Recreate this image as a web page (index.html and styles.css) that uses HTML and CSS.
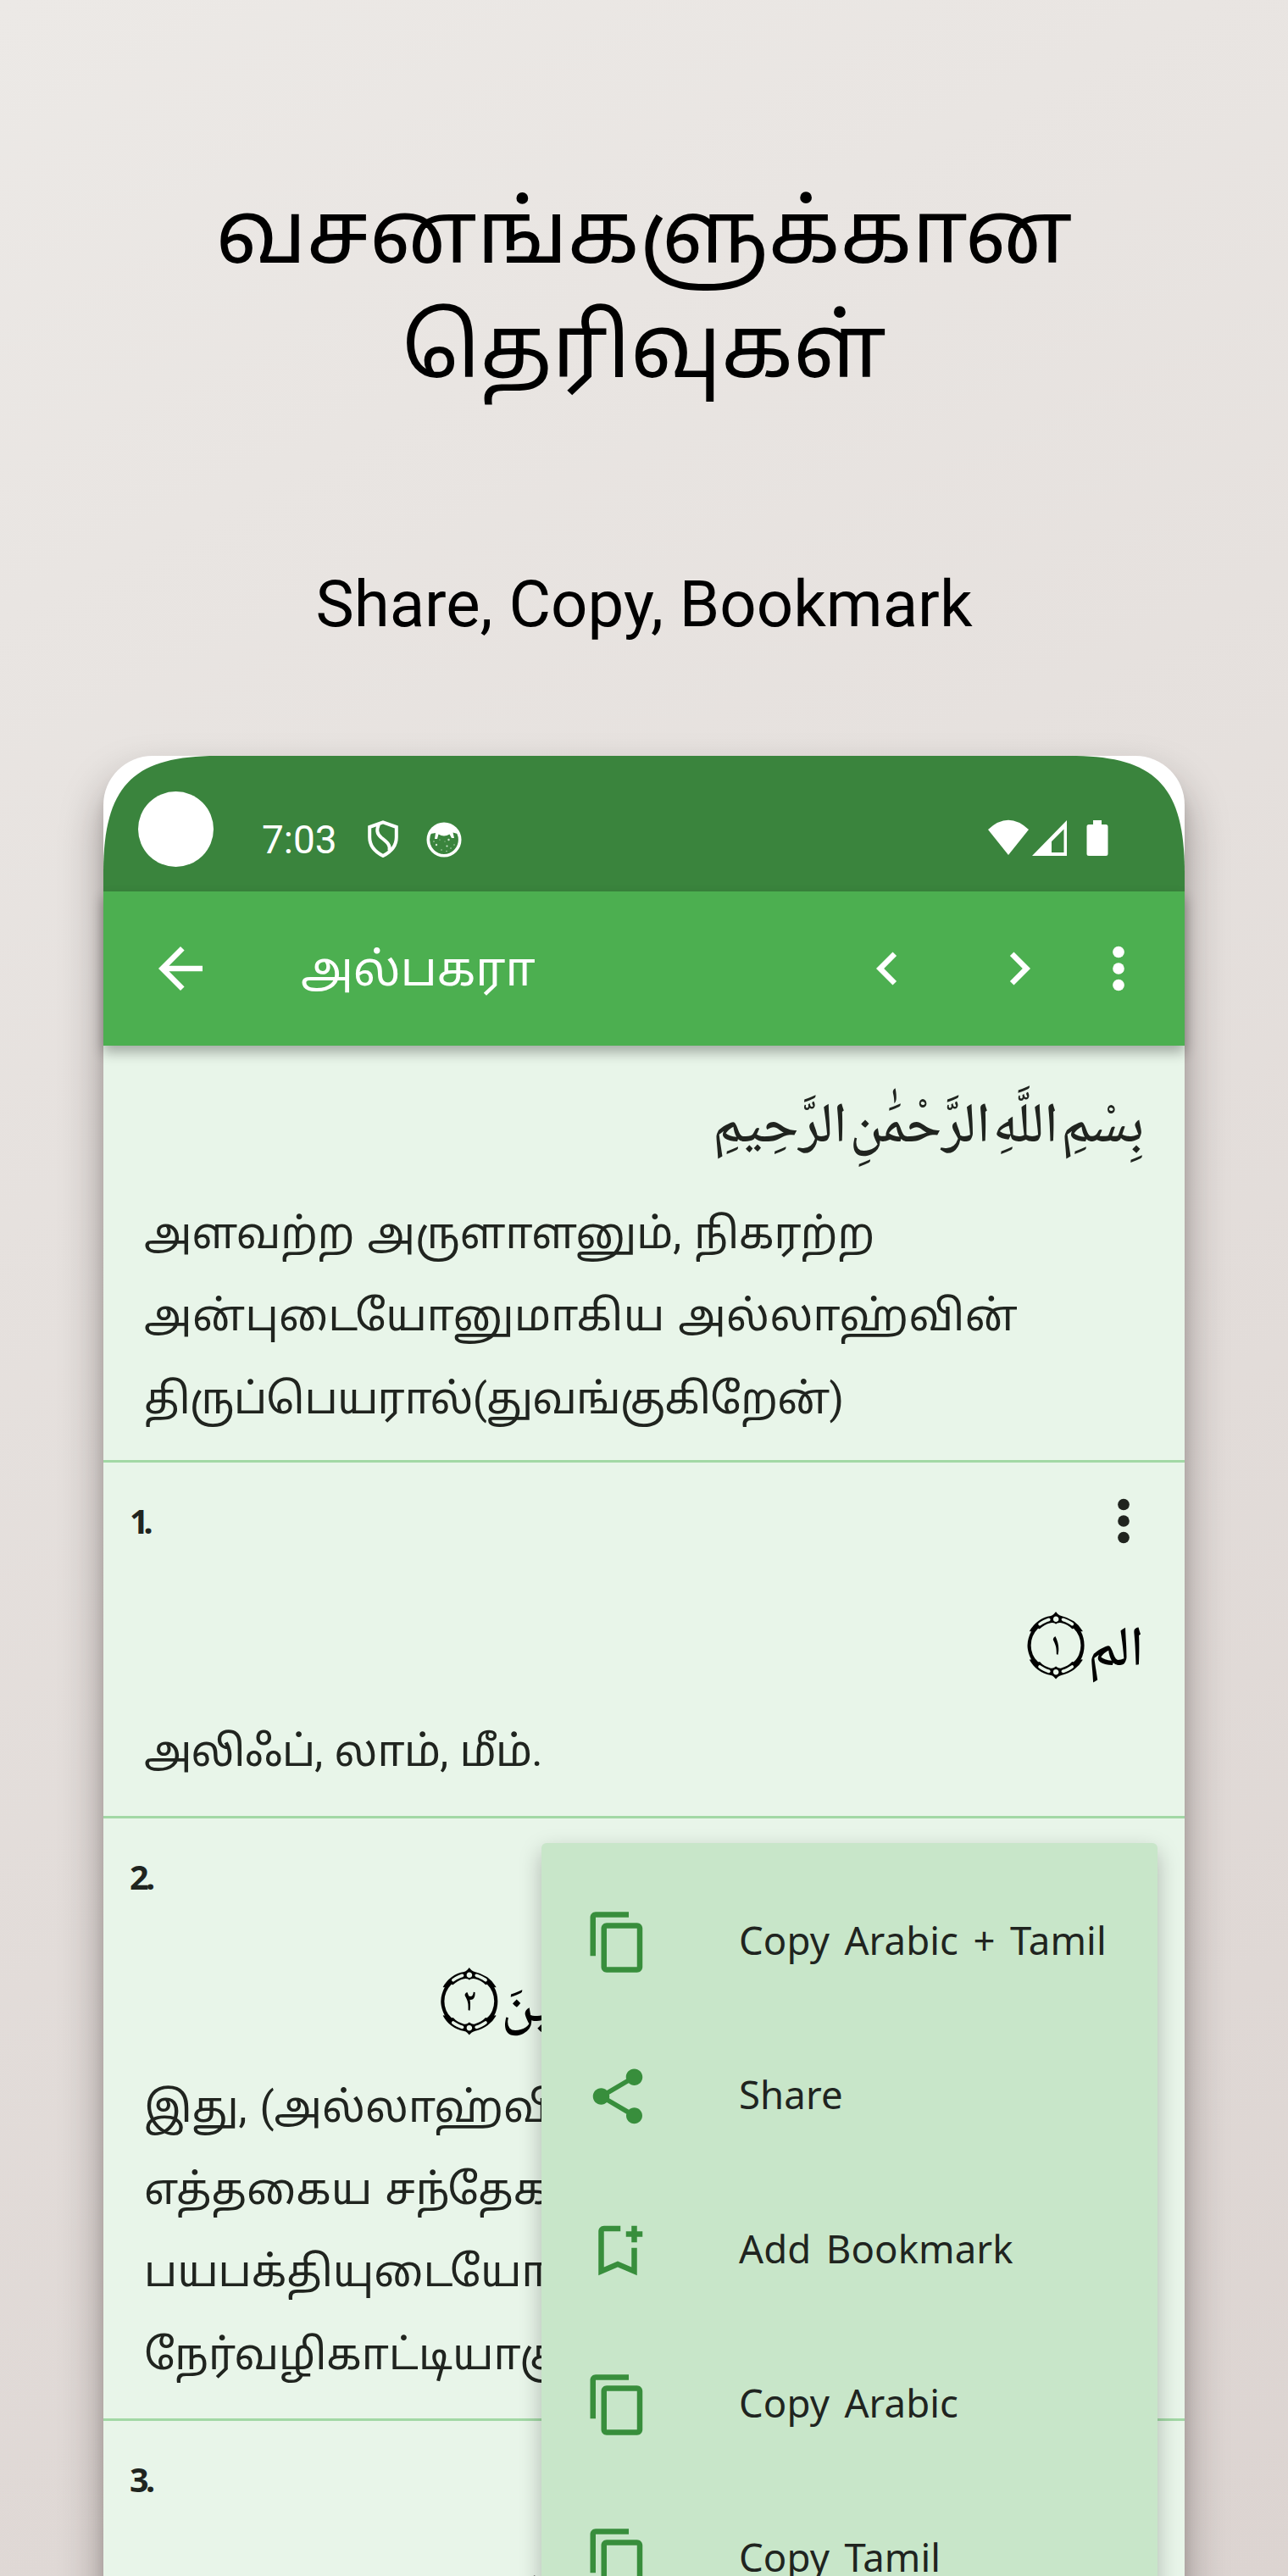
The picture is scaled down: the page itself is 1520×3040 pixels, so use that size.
FILE: index.html
```html
<!DOCTYPE html>
<html lang="ta">
<head>
<meta charset="utf-8">
<title>வசனங்களுக்கான தெரிவுகள்</title>
<link rel="stylesheet" href="styles.css">
</head>
<body>
<svg class="defs" width="0" height="0" aria-hidden="true">
  <symbol id="copy" viewBox="0 0 24 24"><path d="M16 1H4c-1.100 0-2 .9-2 2v14h2V3h12V1zm3 4H8c-1.100 0-2 .9-2 2v14c0 1.100.9 2 2 2h11c1.100 0 2-.9 2-2V7c0-1.100-.9-2-2-2zm0 16H8V7h11v14z"/></symbol>
  <symbol id="share" viewBox="0 0 24 24"><path d="M18 16.080c-.76 0-1.440.3-1.960.77L8.910 12.700c.05-.23.09-.46.09-.7s-.04-.47-.09-.7l7.050-4.110c.54.5 1.250.81 2.040.81 1.660 0 3-1.340 3-3s-1.340-3-3-3-3 1.340-3 3c0 .24.04.47.09.7L8.040 9.810C7.500 9.310 6.790 9 6 9c-1.660 0-3 1.340-3 3s1.340 3 3 3c.79 0 1.500-.31 2.040-.81l7.120 4.160c-.05.21-.08.43-.08.65 0 1.610 1.310 2.920 2.920 2.920s2.920-1.310 2.920-2.920-1.310-2.920-2.920-2.920z"/></symbol>
  <symbol id="bookmark" viewBox="0 0 24 24"><path d="M17 11v6.970l-5-2.140-5 2.140V5h6V3H7c-1.100 0-2 .9-2 2v16l7-3 7 3V11h-2zm4-4h-2v2h-2V7h-2V5h2V3h2v2h2v2z"/></symbol>
  <symbol id="more" viewBox="0 0 24 24"><circle cx="12" cy="6" r="2.100"/><circle cx="12" cy="12" r="2.100"/><circle cx="12" cy="18" r="2.100"/></symbol>
</svg>
<main class="promo">
  <h1 class="title">வசனங்களுக்கான<br>தெரிவுகள்</h1>
  <p class="subtitle">Share, Copy, Bookmark</p>
  <div class="phone">
    <header class="status">
      <svg class="status-bg" viewBox="0 0 1276 160"><path d="M0 160V138C0 35 35 0 135 0H1141C1241 0 1276 35 1276 138V160Z" fill="#3a843d"/></svg>
      <span class="camera"></span>
      <span class="time">7:03</span>
      <svg class="shield" viewBox="0 0 36 44" fill="none" stroke="#fff" stroke-width="4"><path d="M18 2.300L33.800 8V20C33.800 31 27 37.500 18 42C9 37.500 2.200 31 2.200 20V8Z"/><path d="M13 4.500C10.500 11 10 15.500 16 20.500C23 26 27 29 25.500 36" /></svg>
      <svg class="face" viewBox="0 0 42 42"><circle cx="21" cy="21" r="18.700" fill="none" stroke="#fff" stroke-width="3.600"/><path d="M5 14Q10 3 21 2Q32 3 37 14L31.500 12.500 33 19H30L27.500 14.500Q21 18.500 14.500 14.500L13 20H10L11 13Z" fill="#fff"/><g fill="#cfe3cf"><circle cx="12" cy="27" r="1.200"/><circle cx="24.500" cy="28.500" r="1.100"/><circle cx="26.500" cy="21" r="1.200"/><circle cx="18" cy="33" r=".7"/><circle cx="33" cy="27" r=".7"/><circle cx="16" cy="21" r=".6"/><circle cx="29" cy="31" r=".7"/><circle cx="9" cy="23" r=".7"/><circle cx="22" cy="23" r=".5"/><circle cx="24" cy="34.500" r=".7"/></g></svg>
      <svg class="signals" viewBox="0 0 142 42" fill="#fff"><path d="M0 11Q24-11.500 48 11L24 41Z"/><path d="M93 0V42H52ZM89.500 10.500L75 25V38H89.500Z" fill-rule="evenodd"/><path d="M124 0h10v5h5q2.500 0 2.500 2.500v32q0 2.500-2.500 2.500h-20q-2.500 0-2.500-2.500v-32q0-2.500 2.500-2.500h5z"/></svg>
    </header>
    <nav class="appbar">
      <svg class="icon back" viewBox="0 0 24 24"><path d="M20 11H7.830l5.590-5.590L12 4l-8 8 8 8 1.410-1.410L7.830 13H20v-2z"/></svg>
      <span class="surah">அல்பகரா</span>
      <svg class="icon" viewBox="0 0 24 24"><path d="M15.410 7.410L14 6l-6 6 6 6 1.410-1.410L10.830 12z"/></svg>
      <svg class="icon next" viewBox="0 0 24 24"><path d="M10 6L8.590 7.410 13.170 12l-4.580 4.590L10 18l6-6z"/></svg>
      <svg class="icon menu-dots" viewBox="0 0 24 24"><use href="#more"/></svg>
    </nav>
    <section class="verse basmala">
      <p class="arabic" lang="ar">بِسْمِ اللَّهِ الرَّحْمَٰنِ الرَّحِيمِ</p>
      <p class="tamil">அளவற்ற அருளாளனும், நிகரற்ற<br><span class="loose">அன்புடையோனுமாகிய அல்லாஹ்வின்</span><br><span class="tight">திருப்பெயரால்(துவங்குகிறேன்)</span></p>
    </section>
    <section class="verse">
      <div class="verse-head"><span class="num first">1.</span><svg class="icon" viewBox="0 0 24 24"><use href="#more"/></svg></div>
      <p class="arabic ayah" lang="ar">الم<span class="mark">۝١</span></p>
      <p class="tamil"><span class="tight">அலிஃப், லாம், மீம்.</span></p>
    </section>
    <section class="verse">
      <div class="verse-head"><span class="num">2.</span></div>
      <p class="arabic ayah" lang="ar">ذَٰلِكَ الْكِتَابُ لَا رَيْبَ فِيهِ هُدًى لِّلْمُتَّقِينَ<span class="mark">۝٢</span></p>
      <p class="tamil">இது, (அல்லாஹ்வின்)<br>எத்தகைய சந்தேகமும்<br>பயபக்தியுடையோருக்கு<br>நேர்வழிகாட்டியாகும்.</p>
    </section>
    <section class="verse last">
      <div class="verse-head"><span class="num">3.</span></div>
      <p class="arabic ayah" lang="ar">الَّذِينَ يُؤْمِنُونَ بِالْغَيْبِ وَيُقِيمُونَ الصَّلَاةَ</p>
    </section>
    <ul class="menu">
      <li><svg class="icon"><use href="#copy"/></svg><span>Copy Arabic + Tamil</span></li>
      <li><svg class="icon"><use href="#share"/></svg><span>Share</span></li>
      <li><svg class="icon"><use href="#bookmark"/></svg><span>Add Bookmark</span></li>
      <li><svg class="icon"><use href="#copy"/></svg><span>Copy Arabic</span></li>
      <li><svg class="icon"><use href="#copy"/></svg><span>Copy Tamil</span></li>
    </ul>
  </div>
</main>
</body>
</html>
```
FILE: styles.css
```css
* { box-sizing: border-box; margin: 0; padding: 0; }
body { width: 1520px; height: 3040px; overflow: hidden; }
.defs { position: absolute; }
.promo {
  display: flex; flex-direction: column; align-items: center;
  width: 1520px; height: 3040px; overflow: hidden; padding-top: 217px;
  background: linear-gradient(153deg, #ece9e6, #dcd4d1);
  font-family: "Noto Sans Tamil", "Noto Sans", sans-serif;
}
.title { flex: none; font-size: 102.700px; line-height: 135px; font-weight: 400; text-align: center; color: #000; }
.subtitle { margin-top: 171px; height: 234px; flex: none; font: 76.200px/110px Roboto, sans-serif; color: #000; }
.phone {
  position: relative; flex: none; width: 1276px; height: 2200px;
  border-radius: 58px 58px 0 0; background: #fff;
  box-shadow: 0 28px 50px rgba(30, 15, 15, .38), 0 16px 14px rgba(30, 15, 15, .1);
}
.status { position: relative; display: flex; align-items: flex-start; height: 160px; color: #fff; }
.status-bg { position: absolute; inset: 0; width: 1276px; height: 160px; }
.status > :not(.status-bg) { position: relative; }
.camera { width: 89px; height: 89px; margin: 42px 0 0 41px; border-radius: 50%; background: #fff; }
.time { width: 90px; margin: 78px 0 0 57px; font: 46px/42px Roboto, sans-serif; }
.shield { width: 36px; height: 44px; margin: 76px 0 0 35px; }
.face { width: 42px; height: 42px; margin: 78px 0 0 33px; }
.signals { width: 142px; height: 42px; margin: 76px 90px 0 auto; overflow: visible; }
.icon { flex: none; width: 78px; height: 78px; fill: currentColor; }
.appbar {
  position: relative; display: flex; align-items: center; height: 182px; padding-left: 52px;
  background: #4caf50; color: #fff; box-shadow: 0 8px 14px rgba(0, 0, 0, .3);
}
.surah { flex: 1; padding: 11px 0 0 103px; font-size: 55.200px; line-height: 80px; }
.next { margin-left: 78px; }
.menu-dots { margin: 0 39px; }
.verse { padding: 0 48px; background: #e8f5e9; border-bottom: 3px solid #a2d8a5; color: #20241f; }
.basmala { height: 492px; padding-top: 46px; }
.verse-head { display: flex; align-items: center; justify-content: space-between; height: 138px; margin: 0 -15px 0 -17px; font: 700 39.500px/60px "Noto Sans", sans-serif; }
.num { letter-spacing: -3.500px; }
.num.first { letter-spacing: -6px; }
.arabic { height: 127px; padding: 3px 0 0; direction: rtl; font: 500 66px/100px "Noto Naskh Arabic", serif; word-spacing: -11.500px; white-space: nowrap; }
.ayah { height: 154px; padding-top: 37px; color: #000; }
.mark { font: 400 60px/100px "Noto Naskh Arabic", serif; }
.tamil { font: 50.300px/97.300px Roboto, "Noto Sans Tamil", sans-serif; word-spacing: 2.500px; white-space: nowrap; padding-bottom: 27.500px; }
.loose { letter-spacing: .5px; }
.tight { letter-spacing: -.8px; }
.last { height: 300px; border: 0; }
.menu {
  position: absolute; left: 517px; top: 1283px; width: 727px; height: 960px; padding-top: 26px;
  border-radius: 6px; background: #c8e6c9; list-style: none; color: #20241f;
  font: 45.500px/64px "Noto Sans", sans-serif; letter-spacing: .1px; word-spacing: 5.500px;
  box-shadow: 0 10px 26px rgba(0, 0, 0, .25);
}
.menu li { display: flex; align-items: center; gap: 104px; height: 182px; padding-left: 51px; }
.menu span { padding-bottom: 6px; }
.menu .icon { color: #388e3c; }
```
